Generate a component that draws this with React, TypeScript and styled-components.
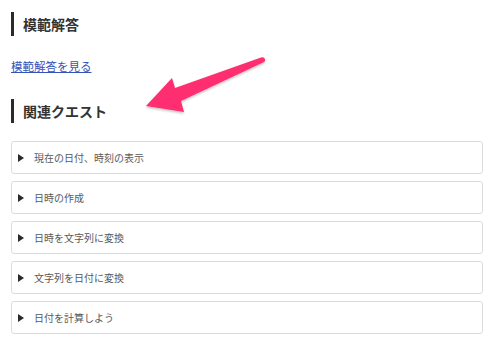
import React from 'react';
import styled, { createGlobalStyle } from 'styled-components';

const GlobalStyle = createGlobalStyle`
  body {
    margin: 0;
    background: #ffffff;
    font-family: "Noto Sans CJK JP", "Noto Sans", sans-serif;
  }
`;

const Page = styled.div`
  position: relative;
  width: 500px;
  height: 354px;
  padding: 12px 17px 0 11px;
  box-sizing: border-box;
  overflow: hidden;
`;

const Heading = styled.h2<{ $gap: number }>`
  margin: 0 0 ${(p) => p.$gap}px 0;
  height: 24px;
  line-height: 24px;
  border-left: 3px solid #2b2b2b;
  padding-left: 9px;
  font-size: 14px;
  font-weight: 700;
  color: #333333;
`;

const AnswerLink = styled.a`
  display: block;
  width: fit-content;
  margin: 0 0 24px 0;
  line-height: 18px;
  font-size: 11.5px;
  color: #3553b8;
  text-decoration: underline;
`;

const QuestList = styled.div`
  display: flex;
  flex-direction: column;
  gap: 7px;
`;

const QuestCard = styled.div`
  display: flex;
  align-items: center;
  height: 33px;
  box-sizing: border-box;
  border: 1px solid #dcdcdc;
  border-radius: 3px;
  padding: 0 0 0 6px;
  font-size: 10px;
  color: #5a5a5a;
`;

const Marker = styled.span`
  width: 0;
  height: 0;
  border-top: 4px solid transparent;
  border-bottom: 4px solid transparent;
  border-left: 6px solid #2b2b2b;
  margin-right: 10px;
`;

const ArrowLayer = styled.svg`
  position: absolute;
  left: 0;
  top: 0;
  pointer-events: none;
`;

const quests = [
  '現在の日付、時刻の表示',
  '日時の作成',
  '日時を文字列に変換',
  '文字列を日付に変換',
  '日付を計算しよう',
];

export default function App() {
  return (
    <Page>
      <GlobalStyle />
      <Heading $gap={21}>模範解答</Heading>
      <AnswerLink href="#">模範解答を見る</AnswerLink>
      <Heading $gap={18}>関連クエスト</Heading>
      <QuestList>
        {quests.map((q) => (
          <QuestCard key={q}>
            <Marker />
            {q}
          </QuestCard>
        ))}
      </QuestList>
      <ArrowLayer width="500" height="354" viewBox="0 0 500 354">
        <defs>
          <filter id="sh" x="-10%" y="-10%" width="120%" height="130%">
            <feDropShadow dx="0" dy="1.5" stdDeviation="1.2" floodColor="#000" floodOpacity="0.25" />
          </filter>
        </defs>
        <path
          d="M261 57.5 Q264 56.5 265 59 Q265.5 61.5 263 62.5 L181 101 L184 112 L146 106 L172 78 L175 88 Z"
          fill="#ff2d6f"
          strokeLinejoin="round"
          filter="url(#sh)"
        />
      </ArrowLayer>
    </Page>
  );
}
